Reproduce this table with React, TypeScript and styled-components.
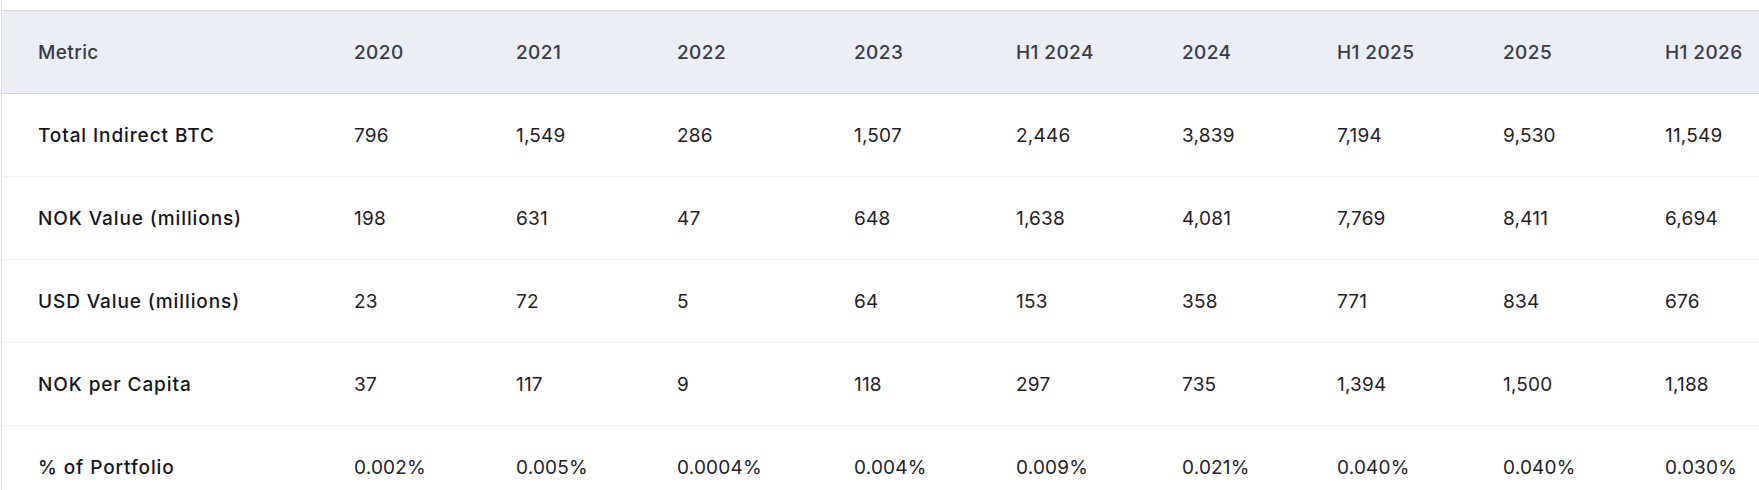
import styled, { createGlobalStyle } from 'styled-components';

const GlobalStyle = createGlobalStyle`
  html, body {
    margin: 0;
    padding: 0;
    background: #ffffff;
  }
  body {
    font-family: Inter, 'Noto Sans', 'Liberation Sans', sans-serif;
    -webkit-font-smoothing: antialiased;
  }
`;

interface Column {
  label: string;
  width: number;
}

const columns: Column[] = [
  { label: 'Metric', width: 316 },
  { label: '2020', width: 162 },
  { label: '2021', width: 161 },
  { label: '2022', width: 177 },
  { label: '2023', width: 162 },
  { label: 'H1 2024', width: 166 },
  { label: '2024', width: 155 },
  { label: 'H1 2025', width: 166 },
  { label: '2025', width: 162 },
  { label: 'H1 2026', width: 160 },
];

const rows: string[][] = [
  ['Total Indirect BTC', '796', '1,549', '286', '1,507', '2,446', '3,839', '7,194', '9,530', '11,549'],
  ['NOK Value (millions)', '198', '631', '47', '648', '1,638', '4,081', '7,769', '8,411', '6,694'],
  ['USD Value (millions)', '23', '72', '5', '64', '153', '358', '771', '834', '676'],
  ['NOK per Capita', '37', '117', '9', '118', '297', '735', '1,394', '1,500', '1,188'],
  ['% of Portfolio', '0.002%', '0.005%', '0.0004%', '0.004%', '0.009%', '0.021%', '0.040%', '0.040%', '0.030%'],
];

export default function App() {
  const totalWidth = columns.reduce((sum, c) => sum + c.width, 0);

  return (
    <>
      <GlobalStyle />
      <ScrollArea>
        <Table style={{ width: totalWidth }}>
          <colgroup>
            {columns.map((c) => (
              <col key={c.label} style={{ width: c.width }} />
            ))}
          </colgroup>
          <thead>
            <HeadRow>
              {columns.map((c) => (
                <HeadCell key={c.label}>{c.label}</HeadCell>
              ))}
            </HeadRow>
          </thead>
          <tbody>
            {rows.map((row) => (
              <BodyRow key={row[0]}>
                {row.map((value, i) =>
                  i === 0 ? (
                    <MetricCell key={i}>{value}</MetricCell>
                  ) : (
                    <ValueCell key={i}>{value}</ValueCell>
                  ),
                )}
              </BodyRow>
            ))}
          </tbody>
        </Table>
      </ScrollArea>
    </>
  );
}

const ScrollArea = styled.div`
  margin-left: 1px;
  border-left: 1px solid #d6dee9;
  padding-top: 10px;
  height: 480px;
  overflow: hidden;
`;

const Table = styled.table`
  border-collapse: collapse;
  table-layout: fixed;
`;

const HeadRow = styled.tr`
  background: #ebeef5;
  border-top: 1px solid #d6dae2;
  border-bottom: 1px solid #d3d8e0;
`;

const HeadCell = styled.th`
  height: 82px;
  padding: 0 0 0 36px;
  text-align: left;
  font-size: 19px;
  font-weight: 500;
  letter-spacing: 0.4px;
  color: #363b46;
  white-space: nowrap;
`;

const BodyRow = styled.tr`
  border-bottom: 1px solid #eef0f3;
`;

const ValueCell = styled.td`
  height: 82px;
  padding: 0 0 0 36px;
  font-size: 19px;
  font-weight: 400;
  letter-spacing: 0.2px;
  color: #1f2126;
  white-space: nowrap;
`;

const MetricCell = styled(ValueCell)`
  font-weight: 500;
  letter-spacing: 0.9px;
  color: #14161b;
`;
